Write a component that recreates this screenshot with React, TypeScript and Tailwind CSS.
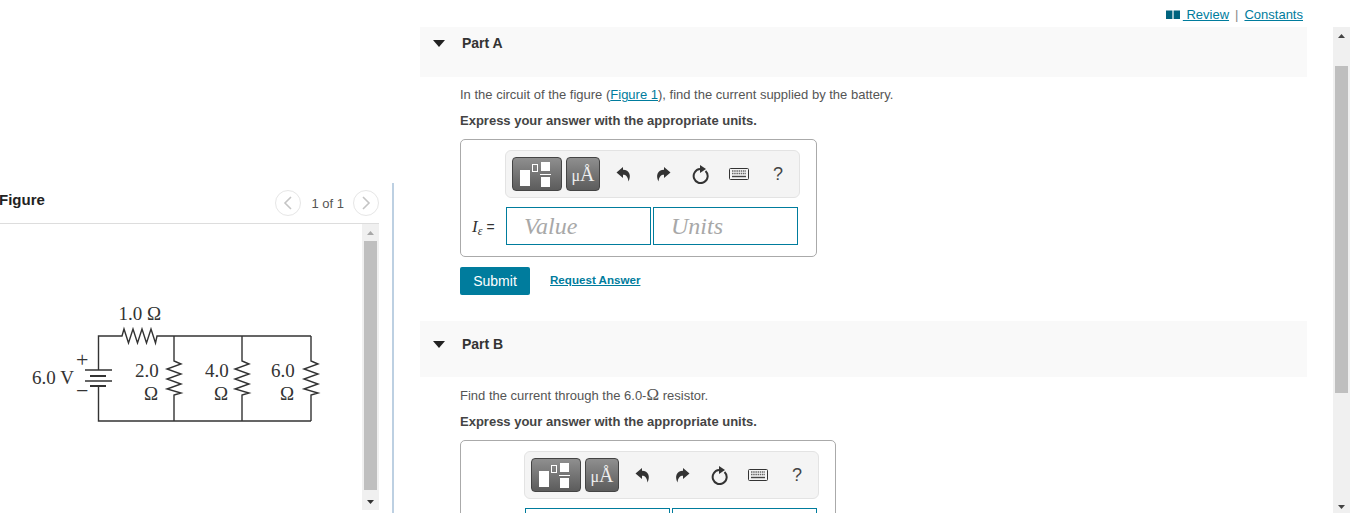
import React from "react";

const ReplyIcon = ({ flip }: { flip?: boolean }) => (
  <svg width="16" height="16" viewBox="0 0 16 16" className={flip ? "-scale-x-100" : ""}>
    <path d="M7 1L0.5 6.5L7 12V8.8C10 8.8 11.8 10.5 12.5 15.5C15.5 9.5 13.5 4 7 3.8Z" fill="#333" />
  </svg>
);

const Toolbar = () => (
  <div className="flex h-[48px] w-[295px] items-center rounded-[6px] border border-[#e3e3e3] bg-[#f4f4f4] pl-[6px]">
    <div className="flex h-[34px] w-[50px] items-center justify-center rounded-[4px] border border-[#444] bg-gradient-to-b from-[#8f8f8f] to-[#5c5c5c]">
      <svg width="36" height="28" viewBox="0 0 36 28">
        <rect x="1" y="10" width="10" height="16" fill="#fff" />
        <rect x="13.5" y="4.5" width="5" height="7" fill="none" stroke="#fff" strokeWidth="1" />
        <rect x="22" y="2" width="9" height="9" fill="#fff" />
        <rect x="21" y="14" width="11" height="1" fill="#fff" />
        <rect x="22" y="17" width="9" height="10" fill="#fff" />
      </svg>
    </div>
    <div className="ml-[4px] flex h-[34px] w-[34px] items-end justify-center rounded-[4px] border border-[#444] bg-gradient-to-b from-[#8f8f8f] to-[#5c5c5c] pb-[6px] font-['Liberation_Serif',serif] leading-none text-[#eee]">
      <span className="text-[16px]">μ</span><span className="text-[20px]">Å</span>
    </div>
    <div className="ml-[16px] flex w-[16px] justify-center"><ReplyIcon /></div>
    <div className="ml-[23px] flex w-[16px] justify-center"><ReplyIcon flip /></div>
    <div className="ml-[21px] flex w-[18px] justify-center">
      <svg width="18" height="19" viewBox="0 0 18 19" fill="none">
        <path d="M13.5 6A7 7 0 1 1 8 4.1" stroke="#333" strokeWidth="2" />
        <path d="M8 0L14 4L8 8Z" fill="#333" />
      </svg>
    </div>
    <div className="ml-[19px] flex w-[20px] justify-center">
      <svg width="20" height="12" viewBox="0 0 20 12" fill="none">
        <rect x="0.5" y="0.5" width="19" height="11" rx="1" fill="#f4f4f4" stroke="#333" />
        <path d="M3 3H17M3 5.5H17" stroke="#666" strokeWidth="1.4" strokeDasharray="1.5 0.7" />
        <path d="M3 8.5H17" stroke="#444" strokeWidth="1.4" />
      </svg>
    </div>
    <div className="ml-[24px] w-[10px] text-center text-[18px] leading-none text-[#444]">?</div>
  </div>
);

const Field = ({ text }: { text?: string }) => (
  <div className="flex h-[38px] w-[145px] items-center border border-[#007c9d] pl-[17px] font-['Liberation_Serif',serif] text-[24px] italic text-[#a8a8a8]">
    {text}
  </div>
);

const Caret = () => (
  <svg width="12" height="7" viewBox="0 0 12 7" className="shrink-0">
    <path d="M0 0H12L6 7Z" fill="#222" />
  </svg>
);

const Resistor = ({ x }: { x: number }) => (
  <path
    d={`M${x} 336V361L${x + 7} 364L${x - 7} 369L${x + 7} 374L${x - 7} 379L${x + 7} 384L${x - 7} 389L${x + 7} 393L${x} 395V421`}
    fill="none"
    stroke="#333"
    strokeWidth="1.4"
  />
);

const Circuit = () => (
  <svg width="362" height="140" viewBox="0 295 362 140" className="font-['Liberation_Serif',serif]">
    <g fill="none" stroke="#333" strokeWidth="1.4">
      <path d="M98.5 370V336H122L124 329L128.500 343L133 329L137.500 343L142 329L146.500 343L151 329L155.500 343L157 336H311" />
      <path d="M98.5 386V421H311" />
      <path d="M85 370H112M85 381H112" />
      <path d="M90 376H106M90 386H106" strokeWidth="2" />
    </g>
    <Resistor x={174} />
    <Resistor x={242} />
    <Resistor x={311} />
    <g fill="#333" fontSize="19">
      <text x="118.500" y="320">1.0 Ω</text>
      <text x="32" y="384">6.0 V</text>
      <text x="135" y="377">2.0</text>
      <text x="144" y="400">Ω</text>
      <text x="205" y="377">4.0</text>
      <text x="214" y="400">Ω</text>
      <text x="271" y="377">6.0</text>
      <text x="280" y="400">Ω</text>
      <text x="76" y="367" fontSize="22">+</text>
      <text x="76" y="398" fontSize="22">−</text>
    </g>
  </svg>
);

const Arrow = ({ up }: { up?: boolean }) => (
  <svg width="7" height="4" viewBox="0 0 7 4">
    <path d={up ? "M0 4L3.5 0L7 4Z" : "M0 0H7L3.5 4Z"} fill="currentColor" />
  </svg>
);

const Scrollbar = ({ className, thumb, upColor, downClass }: { className: string; thumb: string; upColor: string; downClass: string }) => (
  <div className={`flex flex-col items-center bg-[#f0f0f0] ${className}`}>
    <div className={`flex h-[17px] shrink-0 items-center justify-center ${upColor}`}><Arrow up /></div>
    <div className={`w-[13px] bg-[#bfbfbf] ${thumb}`} />
    <div className="flex-1" />
    <div className={`flex h-[17px] shrink-0 items-center justify-center ${downClass}`}><Arrow /></div>
  </div>
);

const Pager = ({ dir }: { dir: "l" | "r" }) => (
  <div className="flex h-[26px] w-[26px] items-center justify-center rounded-full border border-[#e6e6e6]">
    <svg width="10" height="14" viewBox="0 0 10 14" fill="none">
      <path d={dir === "l" ? "M8 1L2 7L8 13" : "M2 1L8 7L2 13"} stroke="#c4c4c4" strokeWidth="1.6" />
    </svg>
  </div>
);

const PartHead = ({ name, className }: { name: string; className: string }) => (
  <div className={`flex items-start bg-[#f9f9f9] pl-[13px] ${className}`}>
    <div className="flex h-[20px] items-center"><Caret /></div>
    <div className="ml-[17px] text-[14px] leading-[20px] font-bold text-[#333]">{name}</div>
  </div>
);

export default function App() {
  return (
    <div className="flex h-[513px] w-[1350px] overflow-hidden bg-white font-['Liberation_Sans',sans-serif] text-[13px] text-[#555]">
      {/* Left pane */}
      <div className="flex w-[394px] shrink-0 flex-col pt-[183px]">
        <div className="flex min-h-0 flex-1 flex-col border-r-2 border-[#bdd0e2] pr-[13px]">
          <div className="flex h-[41px] shrink-0 items-center border-b border-[#dddddd]">
            <div className="-ml-px -mt-[6px] text-[15px] font-bold text-[#222]">Figure</div>
            <div className="ml-auto flex items-center">
              <Pager dir="l" />
              <div className="ml-[10px] mr-[9px] mt-[2px] text-[13px] text-[#555]">1 of 1</div>
              <Pager dir="r" />
            </div>
          </div>
          <div className="flex min-h-0 flex-1 items-stretch pb-[3px]">
            <div className="flex-1 pt-[71px]"><Circuit /></div>
            <Scrollbar className="w-[17px]" thumb="h-[249px]" upColor="text-[#a8a8a8]" downClass="text-[#333]" />
          </div>
        </div>
      </div>

      {/* Right pane */}
      <div className="flex min-w-0 flex-1 flex-col">
        <div className="flex h-[27px] shrink-0 items-start justify-end pr-[47px] pt-[6px] leading-[17px]">
          <svg width="14" height="9" viewBox="0 0 14 9" className="mr-[3px] mt-[4px]">
            <path d="M0 0.5H6.4V9H0ZM7.6 0.5H14V9H7.6Z" fill="#00637e" />
          </svg>
          <span className="whitespace-pre text-[#007c9d] underline"> Review</span>
          <span className="mx-[6px] text-[#888]">|</span>
          <span className="text-[#007c9d] underline">Constants</span>
        </div>
        <div className="flex min-h-0 flex-1">
          <div className="min-w-0 flex-1 overflow-hidden pl-[26px] pr-[26px]">
            <PartHead name="Part A" className="h-[50px] pt-[6px]" />
            <div className="pl-[40px]">
              <p className="mt-[7px] pt-px leading-[20px]">
                In the circuit of the figure (<span className="text-[#007c9d] underline">Figure 1</span>), find the current supplied by the battery.
              </p>
              <p className="mt-[6px] leading-[20px] font-bold text-[#444]">Express your answer with the appropriate units.</p>
              <div className="mt-[8px] h-[118px] w-[357px] rounded-[5px] border border-[#aaaaaa] pl-[11px] pt-[10px]">
                <div className="ml-[33px]"><Toolbar /></div>
                <div className="mt-[9px] flex items-center">
                  <div className="w-[34px] whitespace-nowrap font-['Liberation_Serif',serif] text-[17px] leading-none text-[#333]">
                    <i>I</i><i className="relative top-[3px] text-[12px] leading-none">ε</i>
                    <span className="ml-[4px] font-['Liberation_Sans',sans-serif] text-[14px]">=</span>
                  </div>
                  <div className="flex gap-[2px]">
                    <Field text="Value" />
                    <Field text="Units" />
                  </div>
                </div>
              </div>
              <div className="mt-[10px] flex items-start">
                <div className="flex h-[28px] w-[70px] items-center justify-center rounded-[2px] bg-[#007c9d] text-[14px] text-white">Submit</div>
                <div className="ml-[20px] mt-[4px] text-[11.6px] font-bold text-[#007c9d] underline">Request Answer</div>
              </div>
            </div>
            <PartHead name="Part B" className="mt-[26px] h-[56px] pt-[13px]" />
            <div className="pl-[40px]">
              <p className="mt-[9px] leading-[20px]">
                Find the current through the 6.0-<span className="font-['Liberation_Serif',serif] text-[17px] leading-none">Ω</span> resistor.
              </p>
              <p className="mt-[6px] leading-[20px] font-bold text-[#444]">Express your answer with the appropriate units.</p>
              <div className="mt-[8px] h-[118px] w-[376px] rounded-[5px] border border-[#aaaaaa] pl-[63px] pt-[10px]">
                <Toolbar />
                <div className="mt-[9px] flex gap-[2px] pl-px">
                  <Field />
                  <Field />
                </div>
              </div>
            </div>
          </div>
          <Scrollbar className="w-[17px] shrink-0" thumb="h-[327px] mt-[22px]" upColor="text-[#444]" downClass="pt-[5px] text-[#444]" />
        </div>
      </div>
    </div>
  );
}
